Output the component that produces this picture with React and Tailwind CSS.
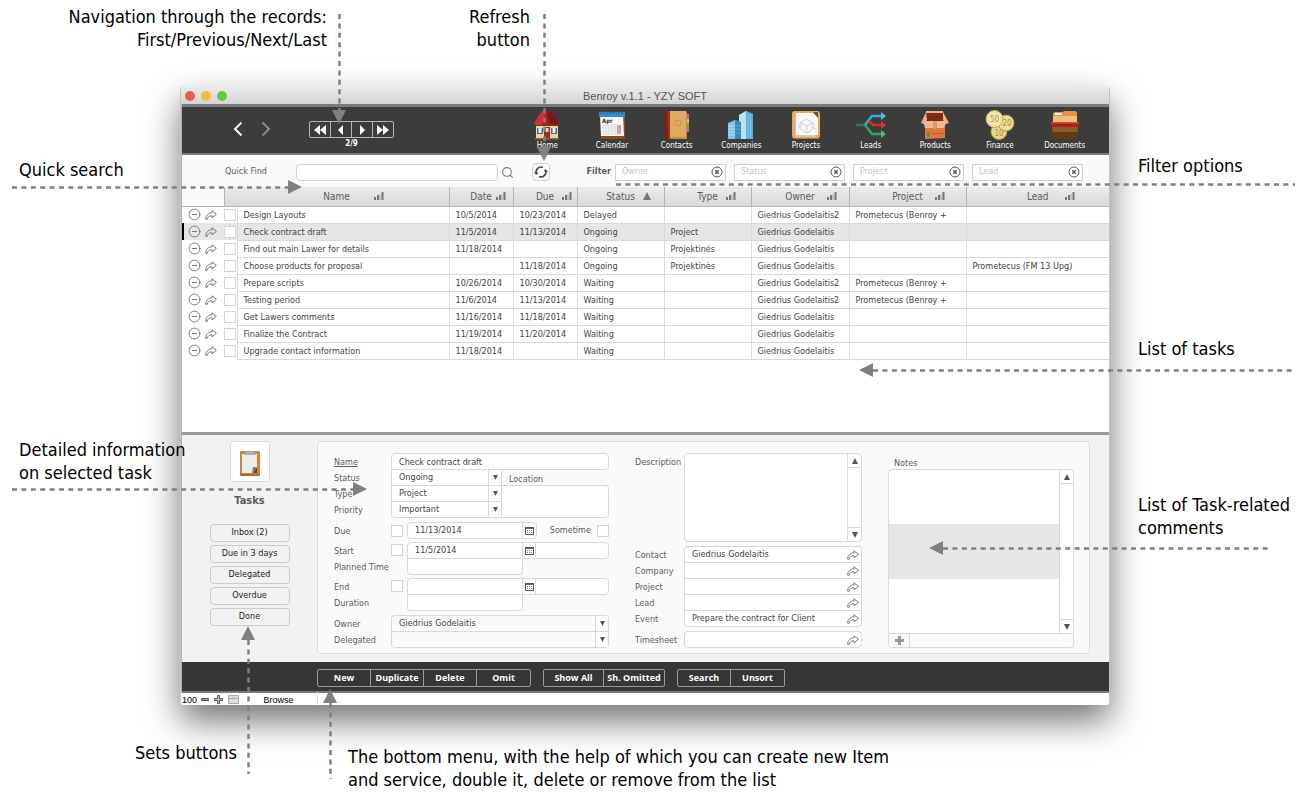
import React from "react";
import { Search, CircleMinus } from "lucide-react";

const tasks = [
  { name: "Design Layouts", date: "10/5/2014", due: "10/23/2014", status: "Delayed", type: "", owner: "Giedrius Godelaitis2", project: "Prometecus (Benroy +", lead: "" },
  { name: "Check contract draft", date: "11/5/2014", due: "11/13/2014", status: "Ongoing", type: "Project", owner: "Giedrius Godelaitis", project: "", lead: "" },
  { name: "Find out main Lawer for details", date: "11/18/2014", due: "", status: "Ongoing", type: "Projektinės", owner: "Giedrius Godelaitis", project: "", lead: "" },
  { name: "Choose products for proposal", date: "", due: "11/18/2014", status: "Ongoing", type: "Projektinės", owner: "Giedrius Godelaitis", project: "", lead: "Prometecus (FM 13 Upg)" },
  { name: "Prepare scripts", date: "10/26/2014", due: "10/30/2014", status: "Waiting", type: "", owner: "Giedrius Godelaitis2", project: "Prometecus (Benroy +", lead: "" },
  { name: "Testing period", date: "11/6/2014", due: "11/13/2014", status: "Waiting", type: "", owner: "Giedrius Godelaitis2", project: "Prometecus (Benroy +", lead: "" },
  { name: "Get Lawers comments", date: "11/16/2014", due: "11/18/2014", status: "Waiting", type: "", owner: "Giedrius Godelaitis", project: "", lead: "" },
  { name: "Finalize the Contract", date: "11/19/2014", due: "11/20/2014", status: "Waiting", type: "", owner: "Giedrius Godelaitis", project: "", lead: "" },
  { name: "Upgrade contact information", date: "11/18/2014", due: "", status: "Waiting", type: "", owner: "Giedrius Godelaitis", project: "", lead: "" },
];

const columns = [
  { key: "name", label: "Name", gap: "pl-6" },
  { key: "date", label: "Date", gap: "pl-1" },
  { key: "due", label: "Due", gap: "pl-2" },
  { key: "status", label: "Status", gap: "pl-2", sorted: true },
  { key: "type", label: "Type", gap: "pl-2" },
  { key: "owner", label: "Owner", gap: "pl-3" },
  { key: "project", label: "Project", gap: "pl-3" },
  { key: "lead", label: "Lead", gap: "pl-4" },
];

const filters = ["Owner", "Status", "Project", "Lead"];
const sets = ["Inbox (2)", "Due in 3 days", "Delegated", "Overdue", "Done"];

/* ---------- small icons ---------- */

const Bars = () => (
  <svg width="10" height="8" viewBox="0 0 10 8" fill="#757575">
    <rect x="0" y="5" width="2" height="3" />
    <rect x="3" y="3" width="2" height="5" />
    <rect x="5.500" y="2" width="1" height="6" opacity=".5" />
    <rect x="7.500" y="0" width="2" height="8" />
  </svg>
);

const Triangle = ({ up, size = 6, color = "#555" }) => (
  <svg width={size} height={size} viewBox="0 0 6 6" fill={color}>
    {up ? <path d="M3 0L6 6H0z" /> : <path d="M0 0h6L3 6z" />}
  </svg>
);

const Forward = () => (
  <svg width="12" height="10" viewBox="0 0 12 10" fill="none" stroke="#777" strokeWidth="1" strokeLinejoin="round">
    <path d="M7 .8L11.400 4.300 7 7.800V5.800C4.500 5.700 3 6.500 2.200 9.300H.7C.7 5.600 3 2.900 7 2.800z" />
  </svg>
);

const Refresh = () => (
  <svg width="14" height="14" viewBox="0 0 14 14" fill="none" stroke="#444" strokeWidth="1.500">
    <path d="M2.200 8.500A5 5 0 019 2.500M11.800 5.500A5 5 0 015 11.500" />
    <path d="M0 7.500h4.600L2.300 10zM9.400 6.500H14L11.700 4z" fill="#444" stroke="none" transform="rotate(0 7 7)" />
  </svg>
);

const Clear = () => (
  <svg width="12" height="12" viewBox="0 0 12 12" fill="none" stroke="#555">
    <circle cx="6" cy="6" r="5" />
    <path d="M4.300 4.300l3.400 3.400M7.700 4.300L4.300 7.700" strokeWidth="1.500" />
  </svg>
);

const Chevron = ({ right }) => (
  <svg width="10" height="16" viewBox="0 0 10 16" fill="none" stroke="currentColor" strokeWidth="2">
    {right ? <path d="M1.500 1.500L8 8l-6.500 6.500" /> : <path d="M8.500 1.500L2 8l6.500 6.500" />}
  </svg>
);

const CalendarGlyph = () => (
  <svg width="9" height="8" viewBox="0 0 9 8">
    <rect x=".5" y=".5" width="8" height="7" fill="#fff" stroke="#555" />
    <path d="M0 1.200h9" stroke="#555" strokeWidth="1.400" />
    <path d="M2 3.500h5M2 5.500h5" stroke="#777" strokeWidth="1" strokeDasharray="1 1" />
  </svg>
);

/* ---------- module icons ---------- */

const HomeIcon = () => (
  <svg width="30" height="30" viewBox="0 0 30 30">
    <path d="M4 13h22v16H4z" fill="#ecd596" />
    <path d="M4 14h22v2H4z" fill="#6b3a22" />
    <path d="M10 1h9l8 11-1 3H4l-2-2z" fill="#a31f22" />
    <path d="M10 1L2 13l2 2h6L14 2z" fill="#cf3034" />
    <path d="M19 1l8 11-1 3-8-1L15 2z" fill="#7e1518" />
    <rect x="12" y="17" width="6" height="12" fill="#a02722" />
    <rect x="13.500" y="18" width="3" height="4" fill="#e8d9c8" />
    <rect x="5" y="18" width="6" height="6" fill="#51698c" />
    <rect x="19" y="18" width="6" height="6" fill="#51698c" />
    <path d="M6.500 18h3v5h-3zM20.500 18h3v5h-3z" fill="#e9eef4" />
    <path d="M3 28h24v1.500H3z" fill="#8a6c3c" />
  </svg>
);

const CalendarIcon = () => (
  <svg width="30" height="30" viewBox="0 0 30 30">
    <path d="M3 4h25v25H4z" fill="#8b4a20" />
    <path d="M3 4h23l1 22H4z" fill="#f7f7f7" />
    <path d="M2 2h26v5H2z" fill="#2f8fd0" />
    <path d="M4 1v3M7 1v3M10 1v3M13 1v3M16 1v3M19 1v3M22 1v3M25 1v3" stroke="#1c5f94" />
    <text x="5" y="13" fontSize="6" fontWeight="700" fill="#333">Apr</text>
    <path d="M6 15h16M6 18h16M6 21h16M6 24h16M6 15v9M9 15v9M12 15v9M15 15v9M18 15v9" stroke="#d3d3d3" strokeWidth=".7" />
    <rect x="20" y="15" width="4" height="9" fill="#e39aa0" />
  </svg>
);

const ContactsIcon = () => (
  <svg width="30" height="30" viewBox="0 0 30 30">
    <path d="M23 4h4v5h-4z" fill="#d45da0" />
    <path d="M23 9h4v4h-4z" fill="#f1c232" />
    <path d="M23 13h4v5h-4z" fill="#6aa84f" />
    <path d="M23 18h4v4h-4z" fill="#b06ad0" />
    <path d="M7 1h16l2 1v27H7z" fill="#c98b3e" />
    <path d="M7 1h17v26H7z" fill="#e0aa5f" />
    <path d="M2 1h6v28H3z" fill="#7c1d16" />
    <path d="M5 1h3v28H6z" fill="#9d2f22" />
    <circle cx="16" cy="13" r="3" fill="none" stroke="#cb9145" />
  </svg>
);

const CompaniesIcon = () => (
  <svg width="30" height="30" viewBox="0 0 30 30">
    <path d="M13 5l7-4 7 3v25H13z" fill="#5fb4da" />
    <path d="M13 5l7-4v28h-7z" fill="#b9e2f3" />
    <path d="M20 1l7 3v25h-7z" fill="#57aed6" />
    <path d="M22 4v24M24.500 5v23" stroke="#9ad3ea" strokeWidth=".8" />
    <path d="M2 13l7-3 6 2v17H2z" fill="#7cc6e4" />
    <path d="M9 10l6 2v17H9z" fill="#2f8dbd" />
    <path d="M2 16h7M2 19h7M2 22h7M2 25h7" stroke="#b5e0f0" />
    <path d="M9 15l6 1M9 19l6 .5M9 23h6" stroke="#5eb1d6" strokeWidth=".8" />
  </svg>
);

const ProjectsIcon = () => (
  <svg width="30" height="30" viewBox="0 0 30 30">
    <rect x="1" y="1" width="28" height="28" rx="3" fill="#c9752d" />
    <rect x="1" y="1" width="28" height="27" rx="3" fill="#eda55a" />
    <path d="M4 5h21v22H4z" fill="#c8c8c8" />
    <path d="M5 3h17l5 5v17H5z" fill="#f8f8f8" />
    <path d="M22 2h5v6z" fill="#555" />
    <path d="M15 9l7 4v6l-6 4-7-4v-6zM9 13l7 3 6-3M16 16v7M7 18l4-2M21 17l4 2" fill="none" stroke="#cfcfcf" />
  </svg>
);

const LeadsIcon = () => (
  <svg width="30" height="30" viewBox="0 0 30 30" fill="none" strokeWidth="2.600">
    <path d="M0 15h10" stroke="#2b7a4b" />
    <path d="M9 15l7-9h9" stroke="#3aa8cf" />
    <path d="M9 15l7 9h9" stroke="#3f9f5f" />
    <path d="M13 11l4 4h8" stroke="#d6292f" />
    <path d="M25 2L30 6l-5 4z" fill="#4bc3e6" />
    <path d="M25 11L30 15l-5 4z" fill="#e0343a" />
    <path d="M25 20L30 24l-5 4z" fill="#53b873" />
  </svg>
);

const ProductsIcon = () => (
  <svg width="30" height="30" viewBox="0 0 30 30">
    <path d="M6 2h17l2 9H5z" fill="#7a2c16" />
    <path d="M6 1h17v2H6z" fill="#f0b28a" />
    <path d="M6 2L1 13l3 1 3-4zM23 2l6 11-3 1-3-4z" fill="#eeb08a" />
    <path d="M5 11h20v17L5 29z" fill="#e27440" />
    <path d="M3 11h24l-3 7H5z" fill="#f2b58f" />
    <path d="M13 11h4v8h-4z" fill="#e0966c" />
    <path d="M7 21l3 2v4l-3-1z" fill="#3f9e4d" />
    <path d="M12 23h12v1H12z" fill="#c85a2a" />
  </svg>
);

const FinanceIcon = () => (
  <svg width="30" height="30" viewBox="0 0 30 30" fontSize="8" textAnchor="middle">
    <circle cx="14" cy="21.500" r="8" fill="#ead58c" stroke="#b4974a" />
    <text x="14" y="26" fill="#a68c48">10</text>
    <circle cx="21" cy="13" r="8" fill="#efdc98" stroke="#b4974a" />
    <text x="22" y="16" fill="#a68c48">20</text>
    <circle cx="9.500" cy="9" r="8.500" fill="#f6e9b5" stroke="#c0a456" />
    <circle cx="9.500" cy="9" r="6.500" fill="none" stroke="#e3cf8b" strokeWidth=".6" />
    <text x="9.500" y="12" fill="#a68c48">50</text>
  </svg>
);

const DocumentsIcon = () => (
  <svg width="30" height="30" viewBox="0 0 30 30">
    <path d="M3 5V3l2-1h8l1-1h11l2 1v12H3z" fill="#e2954a" />
    <path d="M3 6h24v7H3z" fill="#f5bc74" />
    <path d="M5 3h7v2H5z" fill="#f4f4f4" />
    <path d="M2 16h26l-1 12-1 1H4l-1-1z" fill="#8a5d2b" />
    <path d="M2 22h26l-1 6-1 1H4l-1-1z" fill="#613b16" />
    <path d="M1 12h28v5H1z" fill="#a5211a" />
    <path d="M1 12h28v1.500H1z" fill="#d24a3c" />
  </svg>
);

const ClipboardIcon = () => (
  <svg width="24" height="28" viewBox="0 0 24 28">
    <rect x="2" y="3" width="20" height="25" rx="1.500" fill="#a9652a" />
    <rect x="2" y="3" width="20" height="23" rx="1.500" fill="#cb8641" />
    <path d="M4 6h15v14l-5 5H4z" fill="#ececec" />
    <path d="M14 25l1-6 5 .5z" fill="#777" />
    <path d="M15 25h4v-5z" fill="#5f4226" />
    <path d="M6 7l2-3.500h2.500a1.700 1.700 0 013 0H16L18 7z" fill="#a9afb8" />
  </svg>
);

const modules = [
  { label: "Home", Icon: HomeIcon },
  { label: "Calendar", Icon: CalendarIcon },
  { label: "Contacts", Icon: ContactsIcon },
  { label: "Companies", Icon: CompaniesIcon },
  { label: "Projects", Icon: ProjectsIcon },
  { label: "Leads", Icon: LeadsIcon },
  { label: "Products", Icon: ProductsIcon },
  { label: "Finance", Icon: FinanceIcon },
  { label: "Documents", Icon: DocumentsIcon },
];

const records = [
  { label: "First", d: "M8 1v10L2 6zM14 1v10L8 6z" },
  { label: "Previous", d: "M10 1v10L5 6z" },
  { label: "Next", d: "M6 1v10l5-5z" },
  { label: "Last", d: "M2 1v10l6-5zM8 1v10l6-5z" },
];

/* ---------- callout arrows ---------- */

const HLine = ({ className, head }) => (
  <div className={`absolute flex items-center h-3.5 ${className}`}>
    {head === "left" && <svg className="shrink-0" width="14" height="14" fill="#808080"><path d="M14 0v14L0 7z" /></svg>}
    <svg className="flex-1 min-w-0" height="3"><line x1="0" x2="100%" y1="1.500" y2="1.500" stroke="#808080" strokeWidth="2.500" strokeDasharray="5 4.400" /></svg>
    {head === "right" && <svg className="shrink-0" width="14" height="14" fill="#808080"><path d="M0 0v14l14-7z" /></svg>}
  </div>
);

const VLine = ({ className, head }) => (
  <div className={`absolute flex flex-col items-center w-3.5 ${className}`}>
    {head === "up" && <svg className="shrink-0" width="14" height="14" fill="#808080"><path d="M0 14h14L7 0z" /></svg>}
    <svg className="flex-1 min-h-0" width="3"><line y1="0" y2="100%" x1="1.500" x2="1.500" stroke="#808080" strokeWidth="2.500" strokeDasharray="5 4.400" /></svg>
    {head === "down" && <svg className="shrink-0" width="14" height="14" fill="#808080"><path d="M0 0h14L7 14z" /></svg>}
  </div>
);

/* ---------- form parts ---------- */

const Labels = ({ items, className }) => (
  <div className={`shrink-0 pt-px text-[#5c5c5c] ${className}`}>
    {items.map(([id, text, extra]) => (
      <label key={id} htmlFor={id} className={`block h-4 leading-4 whitespace-nowrap ${extra || ""}`}>{text}</label>
    ))}
  </div>
);

const Tick = ({ id, label }) => (
  <input id={id} type="checkbox" aria-label={label} className="appearance-none shrink-0 w-3 h-3 bg-white border border-[#d4d4d4]" />
);

const Dropdown = ({ id, value, className }) => (
  <div className={`flex h-4 border-b border-[#d9d9d9] ${className || ""}`}>
    <select id={id} className="appearance-none flex-1 min-w-0 px-[7px] text-[#444] outline-none">
      <option>{value}</option>
    </select>
    <span className="flex w-[13px] items-center justify-center border-l border-[#d9d9d9] bg-white"><Triangle size={5} /></span>
  </div>
);

const DateRow = ({ id, value, time }) => (
  <div className={`flex h-[17px] bg-white border border-[#d9d9d9] rounded-r ${time ? "rounded-tl w-[202px]" : "rounded-l w-[130px]"}`}>
    <input id={id} defaultValue={value} className="w-[114px] px-[7px] text-[#444] outline-none" />
    <button aria-label="Pick date" className={`flex w-3.5 items-center justify-center border-l border-[#d9d9d9] ${time ? "border-r" : ""}`}><CalendarGlyph /></button>
    {time && <input aria-label="Time" className="flex-1 min-w-0 px-1 outline-none" />}
  </div>
);

const TitleBar = () => (
  <div className="flex items-center h-[18px] px-1 pt-0.5 gap-1.5 rounded-t bg-gradient-to-b from-[#ececec] to-[#d4d4d4]">
    <span className="w-2.5 h-2.5 rounded-full bg-[#ed5a52]" />
    <span className="w-2.5 h-2.5 rounded-full bg-[#f6bd30]" />
    <span className="w-2.5 h-2.5 rounded-full bg-[#62cb44]" />
    <h1 className="flex-1 pr-12 text-center font-['Liberation_Sans',sans-serif] text-[11px] leading-4 text-[#555]">Benroy v.1.1 - YZY SOFT</h1>
  </div>
);

const Toolbar = () => (
  <div className="flex h-[51px] justify-between bg-[#3c3c3c] border-t-[3px] border-b-2 border-[#7a7a7a] text-white">
    <div className="flex pl-[51px] pt-3.5">
      <button aria-label="Back" className="w-2.5 h-4"><Chevron /></button>
      <button aria-label="Forward" className="w-2.5 h-4 ml-[18px] text-[#8a8a8a]"><Chevron right /></button>
      <div className="ml-[38px]">
        <div className="flex w-[85px] h-[17px] border border-[#b5b5b5] rounded-xs divide-x divide-[#b5b5b5]">
          {records.map((r) => (
            <button key={r.label} aria-label={r.label} className="flex flex-1 items-center justify-center">
              <svg width="16" height="12" viewBox="0 0 16 12" fill="#fff"><path d={r.d} /></svg>
            </button>
          ))}
        </div>
        <p className="text-center text-[8px] leading-3 font-bold">2/9</p>
      </div>
    </div>
    <nav className="grid grid-cols-9 w-[582px] mr-3 pt-[3px]">
      {modules.map(({ label, Icon }) => (
        <a key={label} href="#" className="flex flex-col items-center text-[8px] leading-3">
          <Icon />
          {label}
        </a>
      ))}
    </nav>
  </div>
);

const SearchRow = () => (
  <div className="flex h-8 pt-0.5 items-center justify-between bg-[#fafafa] text-[#5c5c5c]">
    <div className="flex items-center pl-[43px]">
      <label htmlFor="quick" className="w-[71px]">Quick Find</label>
      <input id="quick" className="w-[202px] h-[17px] px-2 bg-white border border-[#d0d0d0] rounded outline-none" />
      <Search size={13} className="ml-[3px] text-[#777]" />
      <button aria-label="Refresh" className="flex w-[18px] h-[18px] ml-[18px] items-center justify-center bg-white border border-[#cfcfcf] rounded">
        <Refresh />
      </button>
    </div>
    <div className="flex items-center gap-2 pr-[26px]">
      <span className="font-bold -mr-1">Filter</span>
      {filters.map((f) => (
        <div key={f} className="flex w-[111px] h-[17px] items-center bg-white border border-[#d0d0d0]">
          <input aria-label={`Filter by ${f}`} placeholder={f} className="flex-1 min-w-0 pl-1.5 outline-none placeholder:text-[#c4c4c4]" />
          <button aria-label="Clear" className="mr-0.5"><Clear /></button>
        </div>
      ))}
    </div>
  </div>
);

const TaskTable = () => (
  <div className="h-[245px] bg-white">
    <table className="w-full table-fixed border-collapse text-[#444]">
      <colgroup>
        <col className="w-[42px]" />
        <col className="w-[13px]" />
        <col />
        <col className="w-16" />
        <col className="w-16" />
        <col className="w-[87px]" />
        <col className="w-[87px]" />
        <col className="w-[98px]" />
        <col className="w-[117px]" />
        <col className="w-[143px]" />
      </colgroup>
      <thead>
        <tr className="h-[19px]">
          <td className="bg-[#fafafa] border-b border-[#b5b5b5]" />
          {columns.map((c) => (
            <th key={c.key} colSpan={c.key === "name" ? 2 : 1} className="p-0 font-normal text-[10px] text-[#5c5c5c] bg-gradient-to-b from-[#ebebeb] to-[#d9d9d9] border-l border-b border-[#b5b5b5]">
              <div className="grid grid-cols-[1fr_auto_1fr] items-center">
                <span className="col-start-2">{c.label}</span>
                <span className={c.gap}>{c.sorted ? <Triangle up size={8} color="#777" /> : <Bars />}</span>
              </div>
            </th>
          ))}
        </tr>
      </thead>
      <tbody>
        {tasks.map((t, i) => (
          <tr key={t.name} className={i === 1 ? "h-[17px] bg-[#e6e6e6]" : "h-[17px]"}>
            <td className={i === 1 ? "p-0 shadow-[inset_2px_0_0_black]" : "p-0"}>
              <div className="flex items-center gap-1 pl-1.5">
                <button aria-label="Remove"><CircleMinus size={13} strokeWidth={1.8} className="text-[#777]" /></button>
                <button aria-label="Open"><Forward /></button>
              </div>
            </td>
            <td className="p-0"><div className="flex"><Tick label={t.name} /></div></td>
            {columns.map((c) => (
              <td key={c.key} className="p-0 pl-1.5 leading-4 whitespace-nowrap overflow-hidden border-l border-b border-[#d9d9d9]">{t[c.key]}</td>
            ))}
          </tr>
        ))}
      </tbody>
    </table>
  </div>
);

const TaskForm = () => (
  <div className="w-[275px] shrink-0">
    <div className="flex">
      <Labels className="w-[57px]" items={[["name", "Name", "underline"], ["status", "Status"], ["type", "Type"], ["priority", "Priority"]]} />
      <div className="flex-1">
        <input id="name" defaultValue="Check contract draft" className="block w-full h-[17px] px-[7px] text-[#444] bg-white border border-[#d9d9d9] rounded-t rounded-br outline-none" />
        <div className="flex">
          <div className="w-[111px] bg-white border-x border-[#d9d9d9] rounded-bl">
            <Dropdown id="status" value="Ongoing" />
            <Dropdown id="type" value="Project" />
            <Dropdown id="priority" value="Important" className="rounded-bl" />
          </div>
          <div className="flex-1 flex flex-col">
            <label htmlFor="location" className="h-[15px] leading-[18px] pl-[7px] text-[#5c5c5c]">Location</label>
            <textarea id="location" className="block w-full h-[33px] resize-none bg-white border border-l-0 border-[#d9d9d9] rounded-r outline-none" />
          </div>
        </div>
      </div>
    </div>
    <div className="flex items-center mt-1">
      <Labels className="w-[57px]" items={[["due", "Due"]]} />
      <Tick label="Has due date" />
      <div className="ml-1"><DateRow id="due" value="11/13/2014" /></div>
      <label htmlFor="sometime" className="flex-1 text-right pr-1.5 text-[#5c5c5c]">Sometime</label>
      <Tick id="sometime" />
    </div>
    <div className="flex mt-[3px]">
      <Labels className="w-[57px]" items={[["start", "Start"], ["planned", "Planned Time"]]} />
      <div className="pt-0.5"><Tick label="Has start date" /></div>
      <div className="ml-1">
        <DateRow id="start" value="11/5/2014" time />
        <input id="planned" className="block w-[116px] h-4 px-2 bg-white border border-t-0 border-[#d9d9d9] rounded-b outline-none" />
      </div>
    </div>
    <div className="flex mt-[3px]">
      <Labels className="w-[57px]" items={[["end", "End"], ["duration", "Duration"]]} />
      <div className="pt-0.5"><Tick label="Has end date" /></div>
      <div className="ml-1">
        <DateRow id="end" value="" time />
        <input id="duration" className="block w-[116px] h-4 px-2 bg-white border border-t-0 border-[#d9d9d9] rounded-b outline-none" />
      </div>
    </div>
    <div className="flex mt-1">
      <Labels className="w-[57px]" items={[["owner", "Owner"], ["delegated", "Delegated"]]} />
      <div className="flex-1 border border-b-0 border-[#d9d9d9] rounded">
        <Dropdown id="owner" value="Giedrius Godelaitis" />
        <Dropdown id="delegated" value="" className="rounded-b" />
      </div>
    </div>
  </div>
);

const LinkField = ({ id, value }) => (
  <div className="flex h-4 items-center border-b border-[#d9d9d9] last:rounded-b">
    <input id={id} defaultValue={value} className="flex-1 min-w-0 px-[7px] text-[#444] outline-none" />
    <button aria-label="Open" className="mr-0.5"><Forward /></button>
  </div>
);

const ScrollBar = () => (
  <div className="flex flex-col w-3.5 border-l border-[#d9d9d9] justify-between">
    <button aria-label="Scroll up" className="flex h-3.5 items-center justify-center border-b border-[#d9d9d9]"><Triangle up /></button>
    <button aria-label="Scroll down" className="flex h-3.5 items-center justify-center border-t border-[#d9d9d9]"><Triangle /></button>
  </div>
);

const LinksForm = () => (
  <div className="w-[227px] shrink-0">
    <div className="flex">
      <Labels className="w-[49px]" items={[["description", "Description"]]} />
      <div className="flex flex-1 h-[89px] bg-white border border-[#d9d9d9] rounded">
        <textarea id="description" className="flex-1 min-w-0 resize-none outline-none" />
        <ScrollBar />
      </div>
    </div>
    <div className="flex mt-1">
      <Labels className="w-[49px]" items={[["contact", "Contact"], ["company", "Company"], ["project", "Project"], ["lead", "Lead"], ["event", "Event"]]} />
      <div className="flex-1 min-w-0 bg-white border border-b-0 border-[#d9d9d9] rounded">
        <LinkField id="contact" value="Giedrius Godelaitis" />
        <LinkField id="company" value="" />
        <LinkField id="project" value="" />
        <LinkField id="lead" value="" />
        <LinkField id="event" value="Prepare the contract for Client" />
      </div>
    </div>
    <div className="flex mt-1">
      <Labels className="w-[49px]" items={[["timesheet", "Timesheet"]]} />
      <div className="flex-1 min-w-0 bg-white border border-b-0 border-[#d9d9d9] rounded">
        <LinkField id="timesheet" value="" />
      </div>
    </div>
  </div>
);

const Notes = () => (
  <div className="w-[186px] shrink-0">
    <h3 className="h-4 pl-1.5 pt-0.5 leading-4 text-[#5c5c5c]">Notes</h3>
    <div className="bg-white border border-[#d9d9d9] rounded">
      <div className="flex h-[163px]">
        <div className="flex-1 grid grid-rows-3">
          <div />
          <div className="bg-[#e6e6e6]" />
          <div />
        </div>
        <ScrollBar />
      </div>
      <div className="flex h-[14px] border-t border-[#d9d9d9] bg-[#fafafa] rounded-b">
        <button aria-label="Add note" className="flex w-[21px] items-center justify-center border-r border-[#d9d9d9]">
          <svg width="9" height="9" fill="#999"><path d="M3 0h3v3h3v3H6v3H3V6H0V3h3z" /></svg>
        </button>
      </div>
    </div>
  </div>
);

const Details = () => (
  <div className="flex h-[230px] pt-1.5 border-t-[3px] border-[#9b9b9b] bg-[#f2f2f2]">
    <div className="flex flex-col items-center w-[135px] shrink-0">
      <div className="flex w-10 h-[41px] items-center justify-center bg-white border border-[#d9d9d9] rounded"><ClipboardIcon /></div>
      <h2 className="mt-[11px] text-[11px] leading-4 font-bold text-[#5c5c5c]">Tasks</h2>
      <div className="flex flex-col gap-[3px] mt-[15px]">
        {sets.map((s) => (
          <button key={s} className="w-20 h-[18px] border border-[#cbcbcb] rounded text-[#222]">{s}</button>
        ))}
      </div>
    </div>
    <div className="flex-1 flex justify-between h-[213px] mr-[19px] pl-4 pr-[15px] pt-[11px] bg-[#fafafa] border border-[#dcdcdc] rounded">
      <TaskForm />
      <LinksForm />
      <Notes />
    </div>
  </div>
);

const MenuGroup = ({ items, width }) => (
  <div className="flex h-[18px] border border-[#9a9a9a] rounded-xs divide-x divide-[#9a9a9a]">
    {items.map((i) => (
      <button key={i} className={`${width} font-['Open_Sans',sans-serif] font-bold text-white`}>{i}</button>
    ))}
  </div>
);

const BottomMenu = () => (
  <div className="flex h-[31px] items-center gap-3 pl-[135px] pt-0.5 bg-[#363636] border-b-2 border-[#7a7a7a]">
    <MenuGroup width="w-[53px]" items={["New", "Duplicate", "Delete", "Omit"]} />
    <MenuGroup width="w-[60px]" items={["Show All", "Sh. Omitted"]} />
    <MenuGroup width="w-[53px]" items={["Search", "Unsort"]} />
  </div>
);

const StatusBar = () => (
  <div className="flex h-3 pl-px items-center bg-white rounded-b text-black leading-3 font-['Liberation_Sans',sans-serif]">
    <span className="w-[19px] pt-0.5">100</span>
    <svg width="8" height="3" fill="#999" stroke="#555"><path d="M.5.5h7v2h-7z" /></svg>
    <svg className="ml-[5px]" width="9" height="9" fill="#bbb" stroke="#555"><path d="M3.500.5h2v3h3v2h-3v3h-2v-3h-3v-2h3z" /></svg>
    <svg className="ml-1" width="13" height="9" fill="#ddd" stroke="#aaa"><path d="M1.500.5h10v8h-10zM1.500 3.500h10" /></svg>
    <span className="w-[78px] pt-0.5 text-center border-r border-[#ddd]">Browse</span>
  </div>
);

function App() {
  return (
    <main className="relative min-h-screen min-w-[1180px] overflow-hidden bg-white text-[9px] font-['DejaVu_Sans_Condensed','Noto_Sans',sans-serif]">
      <header className="flex h-[86px] pt-[5px] text-lg leading-[23px] text-right text-black">
        <p className="w-[327px]">Navigation through the records:<br />First/Previous/Next/Last</p>
        <p className="w-[203px]">Refresh<br />button</p>
      </header>

      <div className="flex">
        <aside className="relative z-10 w-[180px] shrink-0 pl-[19px] pt-[72px] text-lg leading-[23px] text-black whitespace-nowrap">
          <p>Quick search</p>
          <p className="mt-[257px]">Detailed information<br />on selected task</p>
        </aside>

        <section className="flex-1 min-w-0 border-x border-[#c4c4c4] rounded shadow-[0_16px_34px_rgba(0,0,0,0.55)]">
          <TitleBar />
          <div className="border-l border-[#b0b0b0]">
            <Toolbar />
            <SearchRow />
            <TaskTable />
            <Details />
            <BottomMenu />
          </div>
          <StatusBar />
        </section>

        <aside className="w-[193px] shrink-0 pl-7 pt-[68px] text-lg leading-[23px] text-black whitespace-nowrap">
          <p>Filter options</p>
          <p className="mt-40">List of tasks</p>
          <p className="mt-[133px]">List of Task-related<br />comments</p>
        </aside>
      </div>

      <footer className="relative flex pt-9 text-lg leading-[23px] text-black">
        <p className="w-[237px] text-right">Sets buttons</p>
        <p className="pl-[111px] pt-1">The bottom menu, with the help of which you can create new Item<br />and service, double it, delete or remove from the list</p>
      </footer>

      <div className="absolute inset-0 z-20 pointer-events-none">
        <VLine head="down" className="left-[332px] top-3.5 h-[110px]" />
        <VLine head="down" className="left-[537px] top-3.5 h-[147px]" />
        <HLine head="right" className="left-3 top-[180px] w-[290px]" />
        <HLine className="left-[616px] right-2 top-[177px]" />
        <HLine head="left" className="left-[859px] right-2 top-[363px]" />
        <HLine head="right" className="left-3 top-[482px] w-[355px]" />
        <HLine head="left" className="left-[929px] right-[31px] top-[541px]" />
        <VLine head="up" className="left-[241px] top-[626px] h-[148px]" />
        <VLine head="up" className="left-[323px] top-[689px] h-[90px]" />
      </div>
    </main>
  );
}

export default App;
